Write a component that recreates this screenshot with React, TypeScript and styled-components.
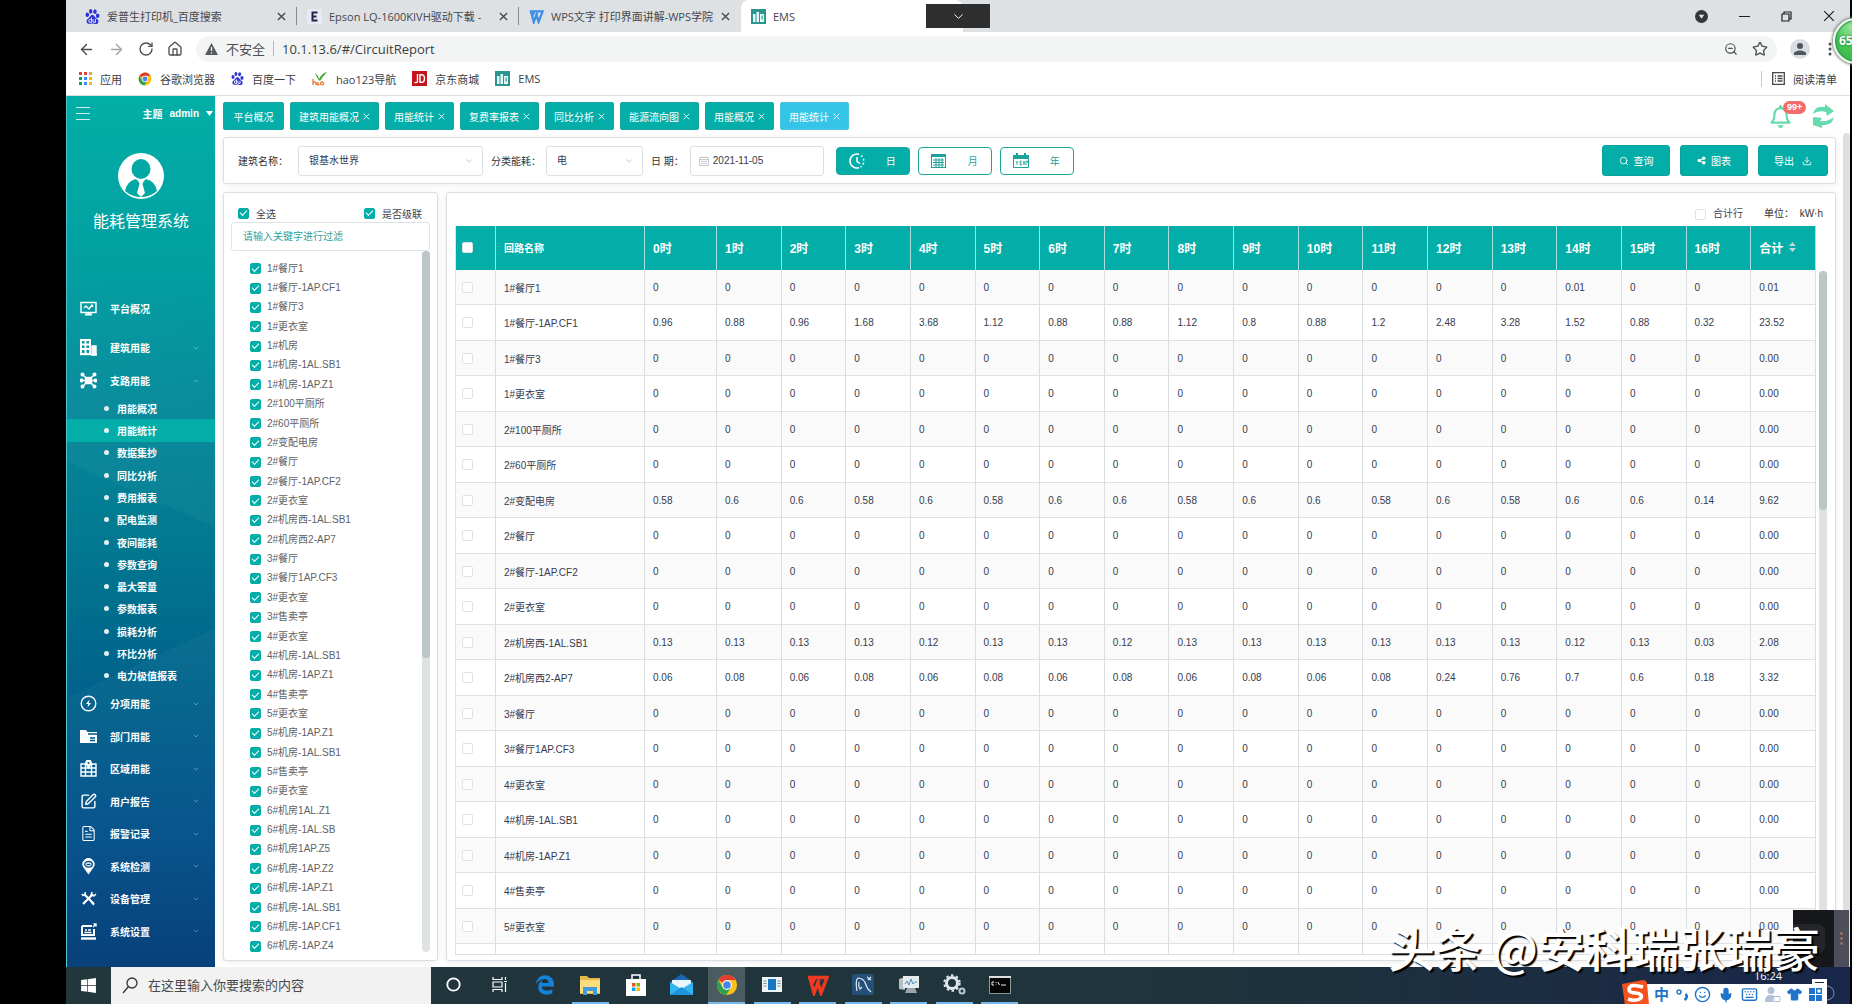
import React from "react";
import styled, { createGlobalStyle, css } from "styled-components";
import { SiBaidu } from "react-icons/si";
import { FaEdgeLegacy, FaRegBell, FaShareNodes, FaWindows, FaShirt } from "react-icons/fa6";
import {
  ArrowLeft,
  ArrowRight,
  RotateCw,
  House,
  ZoomOut,
  Star,
  ChevronDown,
  ChevronUp,
  Search,
  SquarePen,
  FileText,
  Download,
  Smile,
  Mic,
  Keyboard,
} from "lucide-react";

const TEAL = "#03aea8";
const UI = '"Liberation Sans", "Noto Sans CJK SC", sans-serif';
const CHROME = '"Open Sans", "Noto Sans CJK SC", sans-serif';

const Global = createGlobalStyle`
  * { box-sizing: border-box; }
  body { margin: 0; background: #000; font-family: ${UI}; font-size: 10px; color: #333; }
  button, input, select { font-family: inherit; font-size: inherit; margin: 0; padding: 0; }
  button { cursor: pointer; }
  ul { list-style: none; margin: 0; padding: 0; }
  a { color: inherit; text-decoration: none; }
`;

const Desktop = styled.div`
  position: relative;
  height: 100vh;
  padding: 0 2px 0 66px;
  overflow: hidden;
  display: flex;
  flex-direction: column;
`;

/* ---------- browser ---------- */

const TabStrip = styled.div`
  height: 32px;
  flex: none;
  background: #dee1e4;
  display: flex;
  align-items: center;
  padding-left: 9px;
  font-family: ${CHROME};
  font-size: 11px;
  color: #45484c;
`;

const BrowserTab = styled.div<{ $active?: boolean }>`
  width: 222px;
  height: 32px;
  padding: 0 11px 0 10px;
  display: flex;
  align-items: center;
  gap: 7px;
  position: relative;
  ${(p) =>
    p.$active
      ? css`
          background: #fff;
          border-radius: 8px 8px 0 0;
        `
      : css`
          &::after {
            content: "";
            position: absolute;
            right: 0;
            top: 7px;
            height: 18px;
            width: 1px;
            background: #85898d;
          }
          &:nth-child(3)::after {
            display: none;
          }
        `}
`;

const TabTitle = styled.span`
  flex: 1;
  overflow: hidden;
  white-space: nowrap;
`;

const PlainButton = styled.button`
  border: 0;
  background: none;
  color: inherit;
  display: inline-flex;
  align-items: center;
  justify-content: center;
`;

const WindowButtons = styled.div`
  margin-left: auto;
  display: flex;
  align-items: center;
  gap: 31px;
  padding-right: 15px;
  color: #1d1f21;
`;

const PullDown = styled.button`
  position: absolute;
  left: 50%;
  top: 4px;
  width: 64px;
  height: 24px;
  border: 0;
  background: #2e2e2e;
  color: #fff;
  display: flex;
  align-items: center;
  justify-content: center;
`;

const AddressRow = styled.div`
  height: 34px;
  flex: none;
  background: #fff;
  display: flex;
  align-items: center;
  padding: 0 10px 0 12px;
  gap: 13px;
  color: #4b4e52;
  font-family: ${CHROME};
`;

const AddressBar = styled.label`
  flex: 1;
  height: 26px;
  border-radius: 13px;
  background: #f3f5f4;
  display: flex;
  align-items: center;
  gap: 8px;
  padding: 0 9px 1px;
  font-size: 13px;
`;

const AddressIcons = styled.span`
  display: flex;
  align-items: center;
  gap: 14px;
`;

const Divider = styled.span`
  width: 1px;
  height: 15px;
  background: #b4b7ba;
`;

const AddressInput = styled.input`
  flex: 1;
  border: 0;
  outline: 0;
  background: none;
  color: #3c4043;
`;

const Avatar = styled.span`
  width: 20px;
  height: 20px;
  border-radius: 50%;
  background: #d9dce1;
  display: grid;
  place-items: center;
`;

const Bookmarks = styled.nav`
  height: 30px;
  flex: none;
  background: #fff;
  border-bottom: 1px solid #dcdedf;
  display: flex;
  align-items: center;
  padding: 0 13px 4px;
  gap: 16px;
  font-family: ${CHROME};
  font-size: 11px;
  color: #3c4043;
`;

const Bookmark = styled.a`
  display: flex;
  align-items: center;
  gap: 8px;
`;

const ReadingList = styled(Bookmark)`
  margin-left: auto;
  padding-left: 10px;
  border-left: 1px solid #c8cacc;
`;

/* ---------- application shell ---------- */

const Shell = styled.div`
  flex: 1;
  min-height: 0;
  display: flex;
  background: #fff;
`;

const Sidebar = styled.aside`
  width: 149px;
  flex: none;
  border-left: 1px solid #52c3d2;
  color: #fff;
  background:
    linear-gradient(155deg, transparent 64%, rgba(255, 255, 255, 0.03) 64%),
    linear-gradient(24deg, transparent 54%, rgba(255, 255, 255, 0.03) 54%, transparent 78%),
    linear-gradient(#02afa6 0%, #029fa1 20%, #06899a 36%, #027a91 50%, #00658b 66%, #00508a 84%, #003a76 100%);
`;

const SideTop = styled.header`
  height: 34px;
  padding: 0 2px 0 9px;
  display: flex;
  align-items: center;
  gap: 7px;
  font-size: 10px;
  font-weight: 700;
`;

const Burger = styled(PlainButton)`
  margin-right: auto;
  opacity: 0.8;
`;

const Profile = styled.div`
  height: 178px;
  padding-top: 23px;
  display: flex;
  flex-direction: column;
  align-items: center;
  gap: 10px;
  font-size: 16px;
  line-height: 26px;
`;

const Menu = styled.ul`
  & > li:nth-child(even) > a {
    height: 32px;
  }
`;

const MenuLink = styled.a<{ $spaced?: boolean }>`
  height: 33px;
  margin: ${(p) => (p.$spaced ? "-16px 0 6px" : "0")};
  padding: 0 15px 0 13px;
  display: flex;
  align-items: center;
  gap: 13px;
  font-size: 10px;
  font-weight: 700;
  svg:last-child {
    opacity: 0.5;
  }
`;

const MenuText = styled.span`
  flex: 1;
`;

const SubMenu = styled.ul`
  height: 290px;
  display: flex;
  flex-direction: column;
`;

const SubItem = styled.li<{ $active?: boolean }>`
  flex: 1;
  display: flex;
  align-items: center;
  gap: 8px;
  padding-left: 37px;
  font-weight: 700;
  background: ${(p) => (p.$active ? TEAL : "transparent")};
  &::before {
    content: "";
    width: 5px;
    height: 5px;
    border-radius: 50%;
    background: #e2f1f4;
  }
`;

const Main = styled.main`
  flex: 1;
  min-width: 0;
  display: flex;
  flex-direction: column;
`;

const PageTabs = styled.div`
  height: 41px;
  flex: none;
  padding: 6px 15px 7px 8px;
  display: flex;
  align-items: center;
  gap: 6px;
`;

const PageTab = styled.div<{ $active?: boolean }>`
  height: 28px;
  min-width: 61px;
  padding: 0 8px;
  border: 1px solid ${(p) => (p.$active ? "#4cc3e2" : "#1ba39d")};
  border-radius: 2px;
  background: ${(p) => (p.$active ? "#34c4e8" : TEAL)};
  color: #fff;
  display: flex;
  align-items: center;
  justify-content: center;
  gap: 4px;
`;

const Alerts = styled.div`
  margin-left: auto;
  display: flex;
  align-items: center;
  gap: 20px;
  color: #66dcae;
`;

const BellButton = styled(PlainButton)`
  position: relative;
`;

const Badge = styled.span`
  position: absolute;
  left: 14px;
  top: -4px;
  height: 13px;
  padding: 0 4px;
  border-radius: 7px;
  background: #f56c6c;
  color: #fff;
  font-size: 9px;
  font-weight: 700;
  line-height: 13px;
`;

const Body = styled.div`
  flex: 1;
  min-height: 0;
  display: flex;
  gap: 7px;
  padding-left: 8px;
`;

const Content = styled.div`
  flex: 1;
  min-width: 0;
  display: flex;
  flex-direction: column;
  gap: 8px;
  padding-bottom: 6px;
`;

const PageScroll = styled.div`
  width: 7px;
  margin-top: -4px;
  border-radius: 4px 4px 0 0;
  background: #dfdfdf;
`;

const Panel = styled.section`
  border: 1px solid #dcdfe1;
  border-radius: 3px;
  background: #fff;
  box-shadow: 0 1px 6px rgba(0, 0, 0, 0.08);
`;

const Filters = styled(Panel)`
  height: 47px;
  flex: none;
  padding: 0 7px 0 14px;
  display: flex;
  align-items: center;
  gap: 8px;
`;

const Field = styled.label<{ $gap: number }>`
  display: flex;
  align-items: center;
  gap: ${(p) => p.$gap}px;
  color: #303133;
  white-space: pre;
`;

const Box = styled.span<{ $w: number }>`
  width: ${(p) => p.$w}px;
  height: 30px;
  border: 1px solid #dcdfe3;
  border-radius: 3px;
  display: flex;
  align-items: center;
  padding: 0 8px;
  gap: 4px;
  color: #b9bdc4;
`;

const Select = styled.select`
  flex: 1;
  min-width: 0;
  appearance: none;
  border: 0;
  outline: 0;
  background: none;
  color: #333a52;
  padding-left: 2px;
`;

const TextInput = styled.input`
  flex: 1;
  min-width: 0;
  border: 0;
  outline: 0;
  background: none;
  color: #333a52;
`;

const Periods = styled.div`
  display: flex;
  gap: 8px;
  padding-left: 4px;
`;

const PeriodButton = styled.button<{ $on?: boolean }>`
  width: 74px;
  height: 28px;
  padding: 0 13px 0 12px;
  display: flex;
  align-items: center;
  justify-content: space-between;
  border: 1px solid #17a59e;
  border-radius: 4px;
  background: ${(p) => (p.$on ? TEAL : "#fff")};
  color: ${(p) => (p.$on ? "#fff" : "#1fa19b")};
`;

const Actions = styled.div`
  margin-left: auto;
  display: flex;
  gap: 10px;
`;

const ActionButton = styled.button`
  min-width: 68px;
  height: 31px;
  padding: 0 15px;
  border: 1px solid #0ba29c;
  border-radius: 3px;
  background: ${TEAL};
  color: #fff;
  display: flex;
  align-items: center;
  justify-content: center;
  gap: 5px;
`;

const ExportButton = styled(ActionButton)`
  gap: 8px;
`;

const Columns = styled.div`
  flex: 1;
  min-height: 0;
  display: flex;
  gap: 8px;
`;

const Check = styled.input.attrs({ type: "checkbox" })`
  appearance: none;
  width: 11px;
  height: 11px;
  flex: none;
  border: 1px solid #dfe2e6;
  border-radius: 2px;
  background: #fff;
  display: grid;
  place-items: center;
  &:checked {
    background: ${TEAL};
    border-color: ${TEAL};
  }
  &:checked::after {
    content: "";
    width: 6px;
    height: 3px;
    margin-bottom: 2px;
    border: solid #fff;
    border-width: 0 0 1px 1px;
    transform: rotate(-45deg);
  }
`;

const TreePanel = styled(Panel)`
  width: 215px;
  flex: none;
  padding: 13px 7px 4px;
  display: flex;
  flex-direction: column;
`;

const TreeHead = styled.div`
  height: 16px;
  padding: 0 8px 2px 7px;
  display: flex;
  justify-content: space-between;
`;

const CheckLabel = styled.label`
  display: flex;
  align-items: center;
  gap: 7px;
  color: #3d4152;
`;

const KeywordInput = styled.input`
  height: 29px;
  flex: none;
  border: 1px solid #dfe3e6;
  border-radius: 3px;
  padding: 0 11px;
  outline: 0;
  color: ${TEAL};
  &::placeholder {
    color: #2fa198;
    opacity: 1;
  }
`;

const TreeBody = styled.div`
  flex: 1;
  min-height: 0;
  display: flex;
  justify-content: space-between;
`;

const Tree = styled.ul`
  display: flex;
  flex-direction: column;
  padding: 8px 0 0 19px;
  flex: 1;
`;

const TreeItem = styled.li`
  flex: 1;
  display: flex;
  align-items: center;
`;

const TreeLabel = styled(CheckLabel)`
  gap: 6px;
  line-height: 12px;
  color: #606266;
`;

const Track = styled.div`
  width: 8px;
  flex: none;
  border-radius: 4px;
  background: #dfe2e3;
`;

const TreeTrack = styled(Track)`
  margin-bottom: 4px;
`;

const Thumb = styled.div<{ $share: number }>`
  height: ${(p) => p.$share}%;
  border-radius: 4px;
  background: #bcc6c9;
`;

const ReportPanel = styled(Panel)`
  flex: 1;
  min-width: 0;
  padding: 14px 8px 5px;
  display: flex;
  flex-direction: column;
`;

const ReportHead = styled.div`
  height: 19px;
  flex: none;
  display: flex;
  align-items: flex-start;
  justify-content: flex-end;
  gap: 21px;
  padding-right: 4px;
  line-height: 14px;
`;

const ReportBody = styled.div`
  flex: 1;
  min-height: 0;
  display: flex;
  gap: 3px;
  border-bottom: 1px solid #dcdfe1;
`;

const TableClip = styled.div`
  flex: 1;
  min-width: 0;
  overflow: hidden;
`;

const Table = styled.table`
  width: 100%;
  table-layout: fixed;
  border-collapse: separate;
  border-spacing: 0;
  color: #353a50;
  th,
  td {
    padding: 0 0 0 8px;
    text-align: left;
    border-right: 1px solid #dbdddf;
  }
  th:first-child,
  td:first-child {
    padding-left: 6px;
  }
  td {
    border-bottom: 1px solid #dfe1e3;
  }
  td:first-child,
  th:first-child {
    border-left: 1px solid #dfe1e3;
  }
  th {
    height: 44px;
    padding-bottom: 2px;
    background: ${TEAL};
    border-right-color: #a5dedb;
    color: #fff;
    font-size: 12px;
  }
  th:nth-child(2) {
    font-size: 10px;
  }
  tbody tr {
    height: 35px;
  }
  tbody tr:nth-child(even) {
    height: 36px;
  }
  tbody tr:nth-child(odd) {
    background: #fafafa;
  }
`;

const SortHead = styled.span`
  display: flex;
  align-items: center;
  gap: 6px;
`;

const TableTrack = styled(Track)`
  margin-top: 45px;
`;

/* ---------- task bar and floating windows ---------- */

const Taskbar = styled.footer`
  height: 37px;
  flex: none;
  display: flex;
  background: linear-gradient(90deg, #22373c 0%, #1f343b 60%, #1b2c42 85%, #18264a 100%);
`;

const Start = styled(PlainButton)`
  width: 45px;
  color: #fff;
`;

const TaskSearch = styled.label`
  width: 320px;
  background: #f2f2f2;
  display: flex;
  align-items: center;
  gap: 10px;
  padding: 0 11px;
  color: #333;
  font-size: 13px;
  input::placeholder {
    color: #484848;
    opacity: 1;
  }
`;

const TaskItem = styled(PlainButton)<{ $open?: boolean; $active?: boolean }>`
  width: 37px;
  border-bottom: 2px solid ${(p) => (p.$open ? "#76b9ed" : "transparent")};
  background: ${(p) => (p.$active ? "#4a5c60" : "transparent")};
`;

const TaskItems = styled.div`
  width: 583px;
  margin-left: 4px;
  display: flex;
  justify-content: space-between;
`;

const Clock = styled.time`
  margin-left: auto;
  padding: 1px 30px 0 0;
  color: #fff;
  font-family: ${CHROME};
  font-size: 11px;
`;

const Notices = styled(PlainButton)`
  align-items: flex-start;
  padding: 12px 15px 0 0;
`;

const Dock = styled.div`
  position: absolute;
  right: 3px;
  bottom: 37px;
  width: 56px;
  height: 57px;
  background: #16181c;
  display: flex;
  align-items: center;
  justify-content: space-between;
`;

const DockShape = styled.span`
  width: 32px;
  height: 30px;
  border-radius: 0 8px 8px 0;
  background: #24262b;
`;

const DockGrip = styled.span`
  width: 15px;
  height: 57px;
  background: #4d4e59;
  display: grid;
  place-items: center;
`;

const Watermark = styled.div`
  position: absolute;
  right: 32px;
  bottom: 22px;
  font-family: "Noto Sans CJK SC", sans-serif;
  font-size: 47px;
  font-weight: 500;
  line-height: 70px;
  color: #fff;
  text-shadow: 2px 2px 1px #000;
  white-space: nowrap;
`;

const Ime = styled.div`
  position: absolute;
  right: 25px;
  bottom: 0;
  width: 182px;
  height: 20px;
  padding: 1px 5px 0 9px;
  background: #fff;
  color: #1f74c9;
  display: flex;
  align-items: center;
  justify-content: space-between;
  font-size: 15px;
  line-height: 18px;
  font-weight: 700;
`;

const ImeLogo = styled.svg`
  position: absolute;
  left: -24px;
  bottom: -1px;
`;

const SpeedBall = styled.div`
  position: absolute;
  right: -27px;
  top: 18px;
  width: 46px;
  height: 46px;
  border: 2px solid #f2f5f2;
  border-radius: 50%;
  background: radial-gradient(circle at 40% 15%, #9be59a, #45c553 45%, #35b548);
  box-shadow: 0 0 3px 1px #6a7a6a, inset 0 0 2px 1px #1f8f45;
  color: #fff;
  font-family: ${CHROME};
  font-size: 12px;
  font-weight: 700;
  line-height: 42px;
  padding-left: 4px;
  text-shadow: 0 0 2px #145c22;
`;

/* ---------- drawings ---------- */

const Close = ({ size = 9, width = 1.5 }: { size?: number; width?: number }) => (
  <svg width={size} height={size} viewBox="0 0 10 10" stroke="currentColor" strokeWidth={width} aria-hidden>
    <path d="M1 1L9 9M9 1L1 9" />
  </svg>
);

const EmsLogo = () => (
  <svg width="15" height="15" viewBox="0 0 15 15">
    <rect width="15" height="15" fill="#2a968f" />
    <path d="M2 5h2.500v8H2zM5.500 3h2.500v10H5.500zM9 5h4v8H9z" fill="#e6fbf8" />
    <path d="M10.5 6.5h1.200v4h-1.200z" fill="#2a968f" />
  </svg>
);

const ChromeLogo = ({ size }: { size: number }) => (
  <svg width={size} height={size} viewBox="0 0 24 24">
    <circle cx="12" cy="12" r="11" fill="#fbc116" />
    <path d="M12 12L2.5 6.5A11 11 0 0 1 21.5 6.5H12z" fill="#e33b2e" />
    <path d="M2.5 6.5A11 11 0 0 0 11 22.9L16.6 14.6 7.3 14.6z" fill="#2ba24c" />
    <circle cx="12" cy="12" r="5.4" fill="#fff" />
    <circle cx="12" cy="12" r="4.2" fill="#4a86e8" />
  </svg>
);

const WpsW = ({ size, color }: { size: number; color: string }) => (
  <svg width={size} height={size} viewBox="0 0 22 20" fill="none" stroke={color} strokeWidth="3.4">
    <path d="M1 2.5H8L5.5 8M3 3L7 18 12 4.5M9 2.5H14.5M11 8L14 18 20 2.5H14.5" />
  </svg>
);

const AppsGrid = () => (
  <svg width="13" height="13" viewBox="0 0 13 13">
    {["#db4437", "#db4437", "#e8a33d", "#0f9d58", "#4285f4", "#f4b400", "#0f9d58", "#4285f4", "#f4b400"].map((c, i) => (
      <rect key={i} x={(i % 3) * 5} y={Math.floor(i / 3) * 5} width="3" height="3" fill={c} />
    ))}
  </svg>
);

const HaoLogo = () => (
  <svg width="16" height="15" viewBox="0 0 16 15" fill="none">
    <path d="M3 2Q6 4 7 8Q10 2 15 1Q11 5 8 10Q6 9 3 2z" fill="#3fa535" />
    <path d="M1 8v6M1 12q1-2 3 0v2M7 12q-2-1-2 1q1 2 2 0v1M10 14a1.5 1.5 0 1 1 .1 0" stroke="#ec7a35" strokeWidth="1.3" />
  </svg>
);

const Person = () => (
  <svg width="46" height="46" viewBox="0 0 46 46">
    <circle cx="23" cy="23" r="23" fill="#fff" />
    <ellipse cx="23" cy="16" rx="9.5" ry="10" fill="#02a9a4" />
    <path d="M7 38Q9 28 18 26L23 31 28 26Q37 28 39 38Q32 44 23 44T7 38z" fill="#02a9a4" />
    <path d="M20 27h6l-1.500 4L27 40l-4 4-4-4 2.500-9z" fill="#fff" />
  </svg>
);

const Warning = () => (
  <svg width="13" height="12" viewBox="0 0 13 12">
    <path d="M6.5 0L13 12H0z" fill="#55585c" />
    <path d="M6.5 4v4M6.5 9.3v1.300" stroke="#fff" strokeWidth="1.3" />
  </svg>
);

const Refresh = () => (
  <svg width="23" height="24" viewBox="0 0 23 24" fill="currentColor">
    <path d="M1 10Q3 1 13 3V0L22 7 15 12 14 8Q6 6 1 10z" />
    <path d="M22 13Q20 22 10 21L10 24 1 21 1 13 10 14 8 17Q16 18 22 13z" />
  </svg>
);

const DayIcon = () => (
  <svg width="16" height="16" viewBox="0 0 16 16" fill="none" stroke="currentColor" strokeWidth="1.5">
    <path d="M10 1.3A7 7 0 1 0 10 14.7" />
    <path d="M12 2.5A7 7 0 0 1 11.5 14" strokeDasharray="2 2" />
    <path d="M8 4v4.5l3 2" />
  </svg>
);

const MonthIcon = () => (
  <svg width="15" height="15" viewBox="0 0 15 15" fill="none" stroke="currentColor">
    <rect x="0.5" y="1.5" width="14" height="13" />
    <path d="M0 2.5h15" strokeWidth="3" />
    <path d="M2 7h11M2 9.5h11M2 12h11M5 5v9M8 5v9M11 5v9" />
  </svg>
);

const YearIcon = () => (
  <svg width="16" height="15" viewBox="0 0 16 15">
    <path d="M0 2h3V0h2v2h6V0h2v2h3v4H0z" fill="currentColor" />
    <path d="M.5 5.5h15v9H.5z" fill="none" stroke="currentColor" />
    <path d="M3 8l1 2v2M4 10l1-2M9 8H7v4h2M7 10h2M10 12l1-4 1 4M13 12V8h1.5v2" fill="none" stroke="currentColor" strokeWidth=".8" />
  </svg>
);

const CalendarMini = () => (
  <svg width="10" height="10" viewBox="0 0 10 10" fill="none" stroke="currentColor" opacity="0.8">
    <path d="M.5 1.5h9v8h-9zM0 3.5h10M2 5.5h6M2 7.5h6M3 0v2M7 0v2" />
  </svg>
);

const icon = (node: React.ReactNode) => (
  <svg width="17" height="17" viewBox="0 0 17 17" fill="none" stroke="currentColor" strokeWidth="1.4">
    {node}
  </svg>
);

const menuIcons = {
  monitor: icon(
    <>
      <path d="M1 2.5h15v10H1z" />
      <path d="M4 8l2-2 3 3 3-4 1 2" />
      <path d="M5 14.5h7M8.5 12v3" strokeWidth="2" />
    </>
  ),
  building: icon(
    <>
      <path d="M1 1h9v14H1zM1 5.5h9M1 10h9M5.5 1v14" strokeWidth="2" />
      <path d="M12 7h4v9h-4z" fill="currentColor" />
      <path d="M0 15.5h17" />
    </>
  ),
  nodes: icon(
    <>
      <rect x="5.5" y="5.5" width="6" height="6" fill="currentColor" />
      <path d="M6 6L3 3M11 6l3-3M6 11l-3 3M11 11l3 3M1 8.5h15" />
      {[[2.5, 2.5], [14.5, 2.5], [2.5, 14.5], [14.5, 14.5], [1.5, 8.5], [15.5, 8.5]].map(([x, y]) => (
        <circle key={`${x}-${y}`} cx={x} cy={y} r="1.3" fill="currentColor" />
      ))}
    </>
  ),
  bolt: icon(
    <>
      <circle cx="8.5" cy="8.5" r="7.3" />
      <path d="M9.5 4.5L6 9h2.300L7.5 12.5 11 8H8.700z" fill="currentColor" stroke="none" />
    </>
  ),
  folder: icon(
    <>
      <path d="M0 2h6l1.500 2H17v11H0z" fill="currentColor" stroke="none" />
      <path d="M8 6h9M10 10h5M10 12.5h5" stroke="#00558a" />
    </>
  ),
  grid: icon(
    <>
      <path d="M1 4h15v12H1zM1 8h15M1 12h15M5.5 4v12M11.5 4v12" />
      <path d="M8.5 8L6 3.5a2.600 2.600 0 1 1 5 0z" fill="currentColor" />
      <circle cx="8.5" cy="3" r="1" fill="#00558a" stroke="none" />
    </>
  ),
  pin: icon(
    <>
      <path d="M8.5 16.5L3.5 9.5a6 6 0 1 1 10 0z" fill="currentColor" stroke="none" />
      <ellipse cx="8.5" cy="6.3" rx="3.8" ry="2.8" stroke="#00508a" />
      <path d="M6.5 6.5h4" stroke="#00508a" />
    </>
  ),
  tools: icon(
    <>
      <path d="M4 4l10 10M13 4L3 14" strokeWidth="2.2" />
      <path d="M5 2q1 3-2 3.500L1.800 4M12 2l-1 3 3 1 2-2M11 12l3 3" />
    </>
  ),
  laptop: icon(
    <>
      <path d="M2 3h10M2 3v9h12V6" strokeWidth="2" />
      <path d="M1 15.5h15" strokeWidth="2.4" />
      <path d="M4.5 9.5h7M5 7h2M8 7h3M13 4l3-3M13.5 1H16v2.500" />
    </>
  ),
};

const Explorer = () => (
  <svg width="22" height="20" viewBox="0 0 22 20">
    <path d="M1 1h7l2 2h11v16H1z" fill="#e9b84d" />
    <path d="M1 5h20v13H1z" fill="#fbdc7b" />
    <path d="M4 20v-8h14v8h-4v-4H8v4z" fill="#3f9bdb" />
  </svg>
);
const Store = () => (
  <svg width="22" height="24" viewBox="0 0 22 24">
    <path d="M7 7V2h8v5" fill="none" stroke="#fff" strokeWidth="1.5" />
    <path d="M1 6h20v17H1z" fill="#fff" />
    <path d="M7 10h3.500v3.500H7z" fill="#f25022" />
    <path d="M11.5 10H15v3.500h-3.500z" fill="#7fba00" />
    <path d="M7 14.5h3.500V18H7z" fill="#00a4ef" />
    <path d="M11.5 14.5H15V18h-3.500z" fill="#ffb900" />
  </svg>
);
const MailIcon = () => (
  <svg width="23" height="21" viewBox="0 0 23 21">
    <path d="M0 8L11.5 0 23 8v13H0z" fill="#1667b0" />
    <path d="M2 6h19v9H2z" fill="#e9f6fd" />
    <path d="M0 8l11.500 7L23 8v13H0z" fill="#35b5ee" />
    <path d="M0 21l11.500-8L23 21z" fill="#1f93dc" />
  </svg>
);
const NewsIcon = () => (
  <svg width="20" height="15" viewBox="0 0 20 15">
    <path d="M0 0h20v15H0z" fill="#eef3f6" />
    <path d="M6 2h8v11H6z" fill="#1677c5" />
    <path d="M1.5 4h3M1.5 6.5h3M1.5 9h3M15.5 4h3M15.5 6.5h3M15.5 9h3" stroke="#7d8b94" />
  </svg>
);
const DbIcon = () => (
  <svg width="22" height="21" viewBox="0 0 22 21">
    <rect width="22" height="21" rx="2" fill="#234f79" />
    <path d="M5 17Q3 6 6 4Q12 4 14 11Q15 15 19 18M7 8Q6 12 8 15L10 13M15 3l4 3M19 3l-3 3" fill="none" stroke="#dcebf5" strokeWidth="1.2" />
  </svg>
);
const MonitorIcon = () => (
  <svg width="22" height="20" viewBox="0 0 22 20">
    <path d="M1 4l6-2v13l-6-1z" fill="#b8bec2" />
    <path d="M5 1h16v12H5z" fill="#e6ebee" />
    <path d="M7 9l2-3 2 4 2-6 2 5 2-2h2" fill="none" stroke="#4a8fb8" />
    <path d="M9 13h8l2 5H7z" fill="#9da5aa" />
  </svg>
);
const GearsIcon = () => (
  <svg width="24" height="21" viewBox="0 0 24 21" fill="none">
    <circle cx="10" cy="9" r="5.5" stroke="#dfe8f0" strokeWidth="3" />
    <circle cx="10" cy="9" r="7.7" stroke="#dfe8f0" strokeWidth="2" strokeDasharray="2.5 2.5" />
    <circle cx="20" cy="17" r="2.5" stroke="#b6c9da" strokeWidth="2" />
  </svg>
);
const ConsoleIcon = () => (
  <svg width="22" height="18" viewBox="0 0 22 18">
    <path d="M.5.5h21v17H.5z" fill="#050505" stroke="#8d979b" />
    <path d="M0 1h22" stroke="#d9dfe2" strokeWidth="2" />
    <path d="M5 6H3v3h2M7 6v1M7 8.5v.5M9 6l1.500 3M12 9h5" stroke="#eee" fill="none" />
  </svg>
);

/* ---------- data ---------- */

const zero = () => Array<string>(17).fill("0");
const row = (name: string, values?: string, total = "0.00") => ({
  name,
  values: values ? values.split(" ") : zero(),
  total,
});

const rows = [
  row("1#餐厅1", "0 0 0 0 0 0 0 0 0 0 0 0 0 0 0.01 0 0", "0.01"),
  row("1#餐厅-1AP.CF1", "0.96 0.88 0.96 1.68 3.68 1.12 0.88 0.88 1.12 0.8 0.88 1.2 2.48 3.28 1.52 0.88 0.32", "23.52"),
  row("1#餐厅3"),
  row("1#更衣室"),
  row("2#100平厕所"),
  row("2#60平厕所"),
  row("2#变配电房", "0.58 0.6 0.6 0.58 0.6 0.58 0.6 0.6 0.58 0.6 0.6 0.58 0.6 0.58 0.6 0.6 0.14", "9.62"),
  row("2#餐厅"),
  row("2#餐厅-1AP.CF2"),
  row("2#更衣室"),
  row("2#机房西-1AL.SB1", "0.13 0.13 0.13 0.13 0.12 0.13 0.13 0.12 0.13 0.13 0.13 0.13 0.13 0.13 0.12 0.13 0.03", "2.08"),
  row("2#机房西2-AP7", "0.06 0.08 0.06 0.08 0.06 0.08 0.06 0.08 0.06 0.08 0.06 0.08 0.24 0.76 0.7 0.6 0.18", "3.32"),
  row("3#餐厅"),
  row("3#餐厅1AP.CF3"),
  row("4#更衣室"),
  row("4#机房-1AL.SB1"),
  row("4#机房-1AP.Z1"),
  row("4#售卖亭"),
  row("5#更衣室"),
];

const tree =
  "1#餐厅1 1#餐厅-1AP.CF1 1#餐厅3 1#更衣室 1#机房 1#机房-1AL.SB1 1#机房-1AP.Z1 2#100平厕所 2#60平厕所 2#变配电房 2#餐厅 2#餐厅-1AP.CF2 2#更衣室 2#机房西-1AL.SB1 2#机房西2-AP7 3#餐厅 3#餐厅1AP.CF3 3#更衣室 3#售卖亭 4#更衣室 4#机房-1AL.SB1 4#机房-1AP.Z1 4#售卖亭 5#更衣室 5#机房-1AP.Z1 5#机房-1AL.SB1 5#售卖亭 6#更衣室 6#机房1AL.Z1 6#机房-1AL.SB 6#机房1AP.Z5 6#机房-1AP.Z2 6#机房-1AP.Z1 6#机房-1AL.SB1 6#机房-1AP.CF1 6#机房-1AP.Z4".split(
    " "
  );

const subMenu = "用能概况 用能统计 数据集抄 同比分析 费用报表 配电监测 夜间能耗 参数查询 最大需量 参数报表 损耗分析 环比分析 电力极值报表".split(" ");

const lowerMenu: [string, React.ReactNode][] = [
  ["分项用能", menuIcons.bolt],
  ["部门用能", menuIcons.folder],
  ["区域用能", menuIcons.grid],
  ["用户报告", <SquarePen size={17} strokeWidth={2} />],
  ["报警记录", <FileText size={17} strokeWidth={1.5} />],
  ["系统检测", menuIcons.pin],
  ["设备管理", menuIcons.tools],
  ["系统设置", menuIcons.laptop],
];

const pageTabs = ["平台概况", "建筑用能概况", "用能统计", "复费率报表", "同比分析", "能源流向图", "用能概况", "用能统计"];

/* ---------- sections ---------- */

const Browser = () => (
  <>
    <TabStrip>
      <BrowserTab>
        <SiBaidu size={15} color="#2a32d8" />
        <TabTitle>爱普生打印机_百度搜索</TabTitle>
        <PlainButton aria-label="关闭"><Close /></PlainButton>
      </BrowserTab>
      <BrowserTab>
        <svg width="15" height="15" viewBox="0 0 15 15">
          <rect width="15" height="15" fill="#e9eaf4" />
          <path d="M10.5 3.5h-5v8h5M5.5 7.5h4" fill="none" stroke="#22264f" strokeWidth="2" />
        </svg>
        <TabTitle>Epson LQ-1600KIVH驱动下载 -</TabTitle>
        <PlainButton aria-label="关闭"><Close /></PlainButton>
      </BrowserTab>
      <BrowserTab>
        <WpsW size={15} color="#3d8fe8" />
        <TabTitle>WPS文字 打印界面讲解-WPS学院</TabTitle>
        <PlainButton aria-label="关闭"><Close /></PlainButton>
      </BrowserTab>
      <BrowserTab $active>
        <EmsLogo />
        <TabTitle>EMS</TabTitle>
      </BrowserTab>
      <WindowButtons>
        <svg width="13" height="13" viewBox="0 0 13 13">
          <circle cx="6.5" cy="6.5" r="6.5" fill="#33363a" />
          <path d="M3.8 4.8h5.400L6.5 8.800z" fill="#e4e6e8" />
        </svg>
        <PlainButton aria-label="最小化">
          <svg width="11" height="11" viewBox="0 0 11 11" stroke="currentColor"><path d="M0 5.5h11" /></svg>
        </PlainButton>
        <PlainButton aria-label="还原">
          <svg width="11" height="11" viewBox="0 0 11 11" stroke="currentColor" fill="none" strokeWidth="1.2">
            <path d="M1 3h7v7H1zM3 3V1h7v7H8" />
          </svg>
        </PlainButton>
        <PlainButton aria-label="关闭窗口"><Close size={12} width={1} /></PlainButton>
      </WindowButtons>
    </TabStrip>
    <AddressRow>
      <PlainButton aria-label="后退"><ArrowLeft size={17} /></PlainButton>
      <PlainButton aria-label="前进"><ArrowRight size={17} opacity={0.5} /></PlainButton>
      <PlainButton aria-label="刷新"><RotateCw size={16} /></PlainButton>
      <PlainButton aria-label="主页"><House size={16} /></PlainButton>
      <AddressBar>
        <Warning />
        不安全
        <Divider />
        <AddressInput defaultValue="10.1.13.6/#/CircuitReport" aria-label="地址" />
        <AddressIcons>
          <ZoomOut size={14} />
          <Star size={16} />
        </AddressIcons>
      </AddressBar>
      <Avatar>
        <svg width="12" height="12" viewBox="0 0 12 12" fill="#4e5660">
          <circle cx="6" cy="3" r="3" />
          <path d="M0 12V9.5Q6 5.5 12 9.5V12z" />
        </svg>
      </Avatar>
      <PlainButton aria-label="菜单">
        <svg width="17" height="14" viewBox="0 0 17 14" fill="currentColor">
          <circle cx="7" cy="2" r="1.5" /><circle cx="7" cy="7" r="1.5" /><circle cx="7" cy="12" r="1.5" />
        </svg>
      </PlainButton>
    </AddressRow>
    <Bookmarks>
      <Bookmark href="#"><AppsGrid />应用</Bookmark>
      <Bookmark href="#"><ChromeLogo size={14} />谷歌浏览器</Bookmark>
      <Bookmark href="#"><SiBaidu size={13} color="#2a32d8" />百度一下</Bookmark>
      <Bookmark href="#"><HaoLogo />hao123导航</Bookmark>
      <Bookmark href="#">
        <svg width="15" height="15" viewBox="0 0 15 15">
          <rect width="15" height="15" fill="#c3151c" />
          <path d="M5.5 3v7q0 2-3 1.500M8 3.700v7.600h1.500q3 0 3-3.800t-3-3.800z" fill="none" stroke="#fff" strokeWidth="1.4" />
        </svg>
        京东商城
      </Bookmark>
      <Bookmark href="#"><EmsLogo />EMS</Bookmark>
      <ReadingList href="#">
        <svg width="13" height="13" viewBox="0 0 13 13" fill="none" stroke="#45484c" strokeWidth="1.3">
          <path d="M.7.7h11.600v11.600H.7zM3 4h1M5.5 4h5M3 6.5h1M5.5 6.5h5M3 9h1M5.5 9h5" />
        </svg>
        阅读清单
      </ReadingList>
    </Bookmarks>
  </>
);

const SideMenu = () => (
  <Sidebar>
    <SideTop>
      <Burger aria-label="折叠菜单">
        <svg width="14" height="14" viewBox="0 0 14 14" stroke="currentColor"><path d="M0 1.5h14M0 7.5h14M0 13.5h14" /></svg>
      </Burger>
      <span>主题</span>
      <span>admin</span>
      <svg width="7" height="5" viewBox="0 0 7 5"><path d="M0 0h7L3.5 5z" fill="#fff" /></svg>
    </SideTop>
    <Profile>
      <Person />
      能耗管理系统
    </Profile>
    <MenuLink href="#" $spaced>
      {menuIcons.monitor}
      <MenuText>平台概况</MenuText>
    </MenuLink>
    <MenuLink href="#">
      {menuIcons.building}
      <MenuText>建筑用能</MenuText>
      <ChevronDown size={8} />
    </MenuLink>
    <MenuLink href="#">
      {menuIcons.nodes}
      <MenuText>支路用能</MenuText>
      <ChevronUp size={8} />
    </MenuLink>
    <SubMenu>
      {subMenu.map((t) => (
        <SubItem key={t} $active={t === "用能统计"}><a href="#">{t}</a></SubItem>
      ))}
    </SubMenu>
    <Menu>
      {lowerMenu.map(([t, ic]) => (
        <li key={t}>
          <MenuLink href="#">
            {ic}
            <MenuText>{t}</MenuText>
            <ChevronDown size={8} />
          </MenuLink>
        </li>
      ))}
    </Menu>
  </Sidebar>
);

const FilterBar = () => (
  <Filters>
    <Field $gap={10}>
      建筑名称：
      <Box $w={185}>
        <Select><option>银基水世界</option></Select>
        <ChevronDown size={10} />
      </Box>
    </Field>
    <Field $gap={5}>
      分类能耗：
      <Box $w={97}>
        <Select><option>电</option></Select>
        <ChevronDown size={10} />
      </Box>
    </Field>
    <Field $gap={6}>
      日 期：
      <Box $w={134}>
        <CalendarMini />
        <TextInput defaultValue="2021-11-05" />
      </Box>
    </Field>
    <Periods>
      <PeriodButton $on><DayIcon />日</PeriodButton>
      <PeriodButton><MonthIcon />月</PeriodButton>
      <PeriodButton><YearIcon />年</PeriodButton>
    </Periods>
    <Actions>
      <ActionButton><Search size={10} />查询</ActionButton>
      <ActionButton><FaShareNodes size={9} />图表</ActionButton>
      <ExportButton>导出<Download size={10} /></ExportButton>
    </Actions>
  </Filters>
);

const TreeView = () => (
  <TreePanel>
    <TreeHead>
      <CheckLabel><Check defaultChecked />全选</CheckLabel>
      <CheckLabel><Check defaultChecked />是否级联</CheckLabel>
    </TreeHead>
    <KeywordInput placeholder="请输入关键字进行过滤" aria-label="关键字" />
    <TreeBody>
      <Tree>
        {tree.map((t) => (
          <TreeItem key={t}>
            <TreeLabel><Check defaultChecked />{t}</TreeLabel>
          </TreeItem>
        ))}
      </Tree>
      <TreeTrack><Thumb $share={58} /></TreeTrack>
    </TreeBody>
  </TreePanel>
);

const Report = () => (
  <ReportPanel>
    <ReportHead>
      <CheckLabel><Check />合计行</CheckLabel>
      <span>单位：&nbsp;&nbsp;kW·h</span>
    </ReportHead>
    <ReportBody>
      <TableClip>
        <Table>
          <colgroup>
            <col width="41" />
            <col width="149" />
            <col width="72" />
          </colgroup>
          <thead>
            <tr>
              <th><Check aria-label="全选" /></th>
              <th>回路名称</th>
              {zero().map((_, h) => <th key={h}>{h}时</th>)}
              <th>
                <SortHead>
                  合计
                  <svg width="7" height="10" viewBox="0 0 7 10" fill="#c5d5e0"><path d="M0 4L3.5 0 7 4zM0 6h7L3.5 10z" /></svg>
                </SortHead>
              </th>
            </tr>
          </thead>
          <tbody>
            {rows.map((r) => (
              <tr key={r.name}>
                <td><Check aria-label={r.name} /></td>
                <td>{r.name}</td>
                {r.values.map((v, i) => <td key={i}>{v}</td>)}
                <td>{r.total}</td>
              </tr>
            ))}
            <tr>
              {Array.from({ length: 20 }, (_, i) => <td key={i} />)}
            </tr>
          </tbody>
        </Table>
      </TableClip>
      <TableTrack><Thumb $share={35} /></TableTrack>
    </ReportBody>
  </ReportPanel>
);

const Tasks = () => (
  <Taskbar>
    <Start aria-label="开始"><FaWindows size={17} /></Start>
    <TaskSearch>
      <svg width="16" height="17" viewBox="0 0 16 17" fill="none" stroke="currentColor" strokeWidth="1.3">
        <circle cx="10" cy="6" r="5" /><path d="M6.5 9.5L1 16" />
      </svg>
      <TextInput placeholder="在这里输入你要搜索的内容" aria-label="搜索" />
    </TaskSearch>
    <TaskItems>
      <TaskItem aria-label="Cortana">
        <svg width="15" height="15" viewBox="0 0 15 15"><circle cx="7.5" cy="7.5" r="6.2" fill="none" stroke="#fff" strokeWidth="1.8" /></svg>
      </TaskItem>
      <TaskItem aria-label="任务视图">
        <svg width="15" height="15" viewBox="0 0 15 15" fill="none" stroke="#fff" strokeWidth="1.2">
          <path d="M1 0v2.500h9V0M1 5h9v5H1zM1 15v-2.500h9V15M13.5 0v3M13.5 6v9M12 4.500h3" />
        </svg>
      </TaskItem>
      <TaskItem aria-label="Edge"><FaEdgeLegacy size={20} color="#1583dc" /></TaskItem>
      <TaskItem aria-label="文件" $open><Explorer /></TaskItem>
      <TaskItem aria-label="商店"><Store /></TaskItem>
      <TaskItem aria-label="邮件"><MailIcon /></TaskItem>
      <TaskItem aria-label="Chrome" $open $active><ChromeLogo size={22} /></TaskItem>
      <TaskItem aria-label="资讯" $open><NewsIcon /></TaskItem>
      <TaskItem aria-label="WPS" $open><WpsW size={22} color="#ee3a1f" /></TaskItem>
      <TaskItem aria-label="数据库" $open><DbIcon /></TaskItem>
      <TaskItem aria-label="监视器" $open><MonitorIcon /></TaskItem>
      <TaskItem aria-label="服务" $open><GearsIcon /></TaskItem>
      <TaskItem aria-label="控制台" $open><ConsoleIcon /></TaskItem>
    </TaskItems>
    <Clock>16:24</Clock>
    <Notices aria-label="通知">
      <svg width="23" height="22" viewBox="0 0 23 22">
        <path d="M0 0h15v12H0z" fill="#fff" />
        <path d="M3 3.5h9" stroke="#1b2945" />
        <circle cx="15" cy="14" r="7" fill="none" stroke="#8b93a3" />
      </svg>
    </Notices>
  </Taskbar>
);

export default function App() {
  return (
    <Desktop>
      <Global />
      <Browser />
      <Shell>
        <SideMenu />
        <Main>
          <PageTabs>
            {pageTabs.map((t, i) => (
              <PageTab key={i} $active={i === 7}>
                {t}
                {i > 0 && <PlainButton aria-label="关闭"><Close size={7} width={1.3} /></PlainButton>}
              </PageTab>
            ))}
            <Alerts>
              <BellButton aria-label="消息"><FaRegBell size={23} /><Badge>99+</Badge></BellButton>
              <PlainButton aria-label="同步"><Refresh /></PlainButton>
            </Alerts>
          </PageTabs>
          <Body>
            <Content>
              <FilterBar />
              <Columns>
                <TreeView />
                <Report />
              </Columns>
            </Content>
            <PageScroll />
          </Body>
        </Main>
      </Shell>
      <Tasks />
      <PullDown aria-label="展开"><ChevronDown size={15} strokeWidth={1.5} /></PullDown>
      <SpeedBall>65</SpeedBall>
      <Dock>
        <DockShape />
        <DockGrip>
          <svg width="3" height="13" viewBox="0 0 3 13" fill="#c07a5c"><circle cx="1.5" cy="1.5" r="1.2" /><circle cx="1.5" cy="6.5" r="1.2" /><circle cx="1.5" cy="11.5" r="1.2" /></svg>
        </DockGrip>
      </Dock>
      <Watermark>头条 @安科瑞张瑞豪</Watermark>
      <Ime>
        <ImeLogo width="28" height="26" viewBox="0 0 28 26">
          <path d="M1 5L22 1Q25 1 26 4L28 26H4z" fill="#f4511e" />
          <path d="M22 8Q9 4 8 10Q8 14 15 14Q22 15 20 19Q16 23 7 20" fill="none" stroke="#fff" strokeWidth="3.5" />
        </ImeLogo>
        <span>中</span>
        <svg width="12" height="13" viewBox="0 0 12 13" fill="none" stroke="currentColor">
          <circle cx="3" cy="4" r="2" strokeWidth="1.4" /><path d="M9.5 6q3 3-1 6" strokeWidth="2.5" />
        </svg>
        <Smile size={17} />
        <Mic size={16} fill="currentColor" />
        <Keyboard size={17} />
        <svg width="16" height="15" viewBox="0 0 16 15" fill="#b3bfd8">
          <circle cx="6" cy="3.5" r="3.5" /><path d="M0 15Q0 7 6 8q4 0 5 3H8v4z" />
          <path d="M9 9.5h6v5H9z" stroke="#b3bfd8" fill="#fff" />
        </svg>
        <FaShirt size={15} />
        <svg width="13" height="13" viewBox="0 0 13 13" fill="currentColor">
          <path d="M0 0h6v6H0zM0 7h6v6H0zM7 7h6v6H7z" /><path d="M7.7.7h4.600v4.600H7.700z" fill="none" stroke="currentColor" strokeWidth="1.4" />
        </svg>
      </Ime>
    </Desktop>
  );
}
